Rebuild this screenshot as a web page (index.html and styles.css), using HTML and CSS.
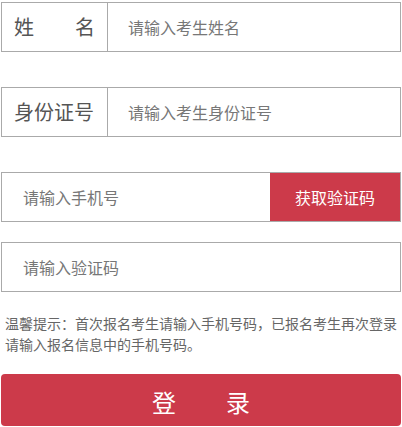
FILE: index.html
```html
<!DOCTYPE html>
<html lang="zh-CN">
<head>
<meta charset="utf-8">
<title>登录</title>
<link rel="stylesheet" href="styles.css">
</head>
<body>
<form class="form">
  <div class="field field-name">
    <label class="label label-split"><span>姓</span><span>名</span></label>
    <input class="input input-labeled" type="text" placeholder="请输入考生姓名">
  </div>
  <div class="field field-id">
    <label class="label">身份证号</label>
    <input class="input input-labeled" type="text" placeholder="请输入考生身份证号">
  </div>
  <div class="field field-phone">
    <input class="input input-plain" type="text" placeholder="请输入手机号">
    <button class="code-btn" type="button">获取验证码</button>
  </div>
  <div class="field field-code">
    <input class="input input-plain" type="text" placeholder="请输入验证码">
  </div>
  <p class="tip">温馨提示：首次报名考生请输入手机号码，已报名考生再次登录请输入报名信息中的手机号码。</p>
  <button class="login-btn" type="button"><span>登</span><span>录</span></button>
</form>
</body>
</html>
```
FILE: styles.css
```css
* { box-sizing: border-box; }
html, body { margin: 0; padding: 0; background: #fff; }
body {
  font-family: "Noto Sans CJK SC", "Noto Sans", sans-serif;
  color: #555;
}
.form {
  display: flex;
  flex-direction: column;
  padding: 2px 1px 0 1px;
  width: 402px;
}
.field {
  display: flex;
  align-items: stretch;
  height: 50px;
  border: 1px solid #aaaaaa;
  background: #fff;
}
.field-id { margin-top: 35px; }
.field-phone { margin-top: 35px; }
.field-code { margin-top: 20px; }
.label {
  width: 106px;
  flex: 0 0 106px;
  border-right: 1px solid #aaaaaa;
  display: flex;
  align-items: center;
  padding-left: 12px;
  font-size: 20px;
  color: #555;
  line-height: 1;
}
.label-split {
  justify-content: space-between;
  padding-right: 12px;
}
.input {
  flex: 1 1 auto;
  min-width: 0;
  border: 0;
  outline: none;
  background: transparent;
  font-family: "Noto Sans CJK SC", "Noto Sans", sans-serif;
  font-size: 16px;
  color: #555;
  padding: 0;
}
.input::placeholder { color: #777; }
.input-labeled { padding-left: 20px; }
.input-plain { padding-left: 21px; }
.code-btn {
  flex: 0 0 130px;
  border: 0;
  background: #cc3a4a;
  color: #fff;
  font-family: "Noto Sans CJK SC", "Noto Sans", sans-serif;
  font-size: 16px;
  padding: 0;
  margin: 0;
}
.tip {
  margin: 21px 0 0 4px;
  font-size: 14px;
  line-height: 21px;
  color: #666;
}
.login-btn {
  margin-top: 19px;
  height: 52px;
  border: 0;
  border-radius: 4px;
  background: #cc3a4a;
  color: #fff;
  font-family: "Noto Sans CJK SC", "Noto Sans", sans-serif;
  font-size: 24px;
  display: flex;
  align-items: center;
  justify-content: center;
  gap: 50px;
  padding: 3px 0 0 0;
}
```
